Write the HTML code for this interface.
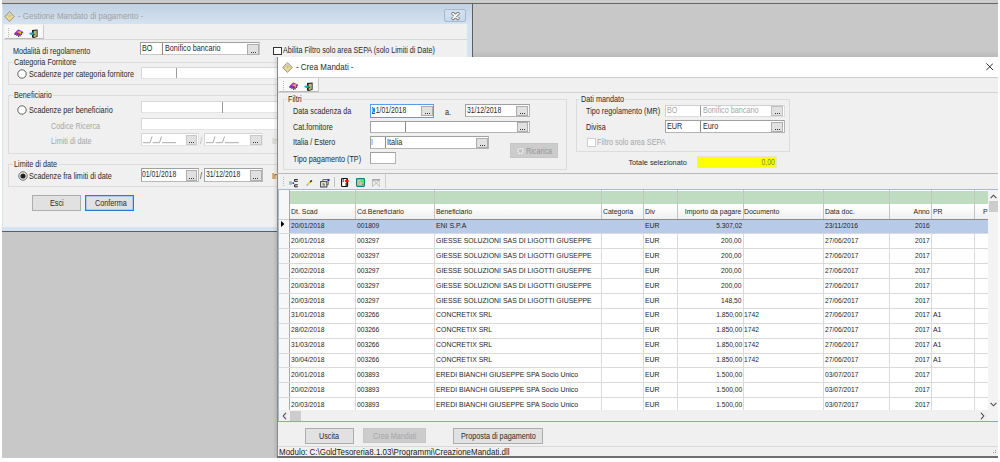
<!DOCTYPE html><html><head><meta charset="utf-8"><style>
*{margin:0;padding:0;box-sizing:border-box}
html,body{width:1000px;height:462px;overflow:hidden;background:#fff}
body{position:relative;font-family:"Liberation Sans",sans-serif;}
div{position:absolute}
.t{font-size:8.6px;line-height:10px;white-space:nowrap;color:#2a2a2a}
.g{font-size:8px;line-height:10px;white-space:nowrap;color:#1e1e1e}
.n{}
.dis{color:#a6a6a6}
</style></head><body><div style="left:2px;top:0px;width:996px;height:3px;background:#cbcbcb"></div>
<div style="left:2px;top:3px;width:996px;height:1px;background:#666"></div>
<div style="left:2px;top:4px;width:996px;height:454px;background:#c8c8c8"></div>
<div style="left:2px;top:4px;width:471px;height:228px;background:#d5e2f1"></div>
<div style="left:472px;top:4px;width:1px;height:228px;background:#5e5e5e"></div>
<div style="left:2px;top:231px;width:471px;height:1px;background:#5e5e5e"></div>
<div style="left:3px;top:4px;width:469px;height:20px;background:linear-gradient(#c1d1e1,#d5e2f0)"></div>
<svg style="position:absolute;left:4px;top:11px" width="11" height="11" viewBox="0 0 11 11"><path d="M5.5 0.5 L10.5 5.5 L5.5 10.5 L0.5 5.5Z" fill="#cfc7a8" stroke="#9a9585" stroke-width="0.8"/><path d="M2.8 5.3 L5.5 8 L8.2 5.3" fill="none" stroke="#f3df7a" stroke-width="1.6"/><path d="M4 4 L5.5 2.5 L7 4" fill="none" stroke="#e6df9a" stroke-width="1"/></svg>
<div class="t" style="left:17.5px;top:11.15px;transform:scaleX(0.905);transform-origin:0 0;font-size:8.8px;color:#a0a0a0;--sx:0.905">- Gestione Mandato di pagamento -</div>
<div style="left:444.3px;top:9.2px;width:22.2px;height:13px;background:linear-gradient(#d4e0ee,#c9d9eb);border:1px solid #a4b8d0;border-radius:2px"></div>
<svg style="position:absolute;left:449.5px;top:10.8px" width="11" height="10" viewBox="0 0 11 10"><path d="M3 2.6 L8 7.4 M8 2.6 L3 7.4" stroke="#6a6a6a" stroke-width="3.4" stroke-linecap="round"/><path d="M3 2.6 L8 7.4 M8 2.6 L3 7.4" stroke="#fafafa" stroke-width="1.9" stroke-linecap="round"/></svg>
<div style="left:3px;top:24px;width:464px;height:202.5px;background:#f0f0f0"></div>
<div style="left:4px;top:38.5px;width:463px;height:1px;background:#d7d7d7"></div>
<div style="left:5px;top:25px;width:39px;height:14px;background:#f8f8f8;border-right:1px solid #cacaca;border-bottom:1px solid #b9b9b9"></div>
<div style="left:8px;top:28px;width:1px;height:1px;background:#b8b8b8"></div>
<div style="left:8px;top:30px;width:1px;height:1px;background:#b8b8b8"></div>
<div style="left:8px;top:32px;width:1px;height:1px;background:#b8b8b8"></div>
<div style="left:8px;top:34px;width:1px;height:1px;background:#b8b8b8"></div>
<div style="left:8px;top:36px;width:1px;height:1px;background:#b8b8b8"></div>
<svg style="position:absolute;left:14px;top:29.3px" width="9.5" height="8.5" viewBox="0 0 9.5 8.5"><path d="M0.6 5.4 L5.4 7.8 L9.2 3.8 L9.2 3.1 L5.3 7 L0.6 4.7Z" fill="#fff"/><path d="M0.6 5.2 L5.4 7.6 L9.2 3.6" fill="none" stroke="#1a1a1a" stroke-width="1.1" stroke-dasharray="1.1 0.9"/><path d="M0.4 4.6 L4.2 0.8 L9 3 L5.2 6.8 Z" fill="#9a1fb5" stroke="#60107a" stroke-width="0.4"/><path d="M2 3.2 L4.3 1.4 L6 2.2 L3.8 4.2Z" fill="#c248dc"/><path d="M4 3.1 L6.6 2.9 L5.5 4.3 M6.6 2.9 L6.2 4.8" stroke="#f5c000" stroke-width="1.1" fill="none"/></svg>
<svg style="position:absolute;left:29.3px;top:28.6px" width="9" height="9" viewBox="0 0 9 9"><path d="M3 1 L8.6 0.4 L8.6 7.8 L4.8 9 L3 8.4 Z" fill="#1c1c1c"/><path d="M4.6 2 L7.8 1.4 L7.8 7.2 L4.6 8.2 Z" fill="#b9b872"/><rect x="5.2" y="5" width="0.9" height="0.9" fill="#222"/><path d="M0 4.6 L1.8 3.4 L4.2 3.6 L4.2 5.8 L1.8 5.9 Z" fill="#18aeb5"/></svg>
<div class="t" style="left:13.2px;top:46.12px;transform:scaleX(0.842);transform-origin:0 0;">Modalità di regolamento</div>
<div style="left:140.2px;top:42.2px;width:119.5px;height:13px;background:#fff;border:1px solid #a0a0a0;border-right-color:#c8c8c8;border-bottom-color:#c8c8c8"></div>
<div style="left:162.2px;top:43px;width:1px;height:11.5px;background:#8a8a8a"></div>
<div class="t" style="left:141.8px;top:43.22px;transform:scaleX(0.842);transform-origin:0 0;">BO</div>
<div class="t" style="left:164.9px;top:43.22px;transform:scaleX(0.842);transform-origin:0 0;">Bonifico bancario</div>
<div style="left:247px;top:44px;width:12px;height:10.5px;background:#e1e1e1;border:1px solid #adadad"></div>
<div style="left:250.5px;top:51.5px;width:5px;height:1px;background:repeating-linear-gradient(90deg,#333 0 1px,transparent 1px 2px)"></div>
<div style="left:273px;top:46.5px;width:9px;height:8.5px;background:#fff;border:1px solid #333"></div>
<div class="t" style="left:283.3px;top:45.42px;transform:scaleX(0.8304976619871097);transform-origin:0 0;">Abilita Filtro solo area SEPA (solo Limiti di Date)</div>
<div style="left:8.2px;top:62.4px;width:459.8px;height:22.800000000000004px;border:1px solid #dcdcdc"></div>
<div style="left:12.5px;top:59px;width:65.38508773125px;height:8px;background:#f0f0f0"></div>
<div class="t" style="left:14px;top:57.42px;transform:scaleX(0.842);transform-origin:0 0;">Categoria Fornitore</div>
<svg style="position:absolute;left:17.4px;top:68.6px" width="10" height="10" viewBox="0 0 10 10"><circle cx="5" cy="5" r="4.2" fill="#fff" stroke="#5a5a5a" stroke-width="0.95"/></svg>
<div class="t" style="left:28.5px;top:69.42px;transform:scaleX(0.842);transform-origin:0 0;">Scadenze per categoria fornitore</div>
<div style="left:140.5px;top:66.5px;width:336px;height:12px;background:#fff;border:1px solid #d6d6d6;border-right-color:#e4e4e4;border-bottom-color:#e4e4e4"></div>
<div style="left:175.8px;top:67.5px;width:1px;height:10px;background:#9a9a9a"></div>
<div style="left:8.2px;top:94.5px;width:459.8px;height:59.19999999999999px;border:1px solid #dcdcdc"></div>
<div style="left:12.5px;top:91.5px;width:40.836288293749995px;height:8px;background:#f0f0f0"></div>
<div class="t" style="left:14px;top:89.92px;transform:scaleX(0.842);transform-origin:0 0;">Beneficiario</div>
<svg style="position:absolute;left:17.4px;top:105.4px" width="10" height="10" viewBox="0 0 10 10"><circle cx="5" cy="5" r="4.2" fill="#fff" stroke="#5a5a5a" stroke-width="0.95"/></svg>
<div class="t" style="left:28.5px;top:105.42px;transform:scaleX(0.842);transform-origin:0 0;">Scadenze per beneficiario</div>
<div class="t dis" style="left:50.7px;top:121.42px;transform:scaleX(0.842);transform-origin:0 0;">Codice Ricerca</div>
<div class="t dis" style="left:50.7px;top:136.12px;transform:scaleX(0.842);transform-origin:0 0;">Limiti di date</div>
<div style="left:140.5px;top:101.3px;width:336px;height:12px;background:#fff;border:1px solid #d6d6d6;border-right-color:#e4e4e4;border-bottom-color:#e4e4e4"></div>
<div style="left:222px;top:102.3px;width:1.2px;height:10.5px;background:#9a9a9a"></div>
<div style="left:140.5px;top:117.5px;width:336px;height:12px;background:#fff;border:1px solid #d6d6d6;border-right-color:#e4e4e4;border-bottom-color:#e4e4e4"></div>
<div style="left:140.5px;top:133.2px;width:58.3px;height:13.2px;background:#fff;border:1px solid #d6d6d6;border-right-color:#e4e4e4;border-bottom-color:#e4e4e4"></div>
<div style="left:185.8px;top:134.8px;width:11.2px;height:10.2px;background:#e1e1e1;border:1px solid #c8c8c8"></div>
<div style="left:188.9px;top:142.0px;width:5px;height:1px;background:repeating-linear-gradient(90deg,#333 0 1px,transparent 1px 2px)"></div>
<div style="left:204.2px;top:133.2px;width:58.8px;height:13.2px;background:#fff;border:1px solid #d6d6d6;border-right-color:#e4e4e4;border-bottom-color:#e4e4e4"></div>
<div style="left:250px;top:134.8px;width:11.5px;height:10.2px;background:#e1e1e1;border:1px solid #c8c8c8"></div>
<div style="left:253.25px;top:142.0px;width:5px;height:1px;background:repeating-linear-gradient(90deg,#333 0 1px,transparent 1px 2px)"></div>
<svg style="position:absolute;left:142.5px;top:136px" width="34" height="7.5" viewBox="0 0 34 7.5"><path d="M0 6.7 H7 L9 0.5 M9.5 6.7 H16.5 L18.5 0.5 M19 6.7 H33" fill="none" stroke="#a0a0a0" stroke-width="0.9"/></svg>
<svg style="position:absolute;left:206.2px;top:136px" width="34" height="7.5" viewBox="0 0 34 7.5"><path d="M0 6.7 H7 L9 0.5 M9.5 6.7 H16.5 L18.5 0.5 M19 6.7 H33" fill="none" stroke="#a0a0a0" stroke-width="0.9"/></svg>
<div class="t" style="left:199.5px;top:136.42px;transform:scaleX(0.842);transform-origin:0 0;color:#b0b0b0">/</div>
<div class="t" style="left:271.5px;top:135.92px;transform:scaleX(0.842);transform-origin:0 0;color:#c0c0c0">In</div>
<div style="left:8.2px;top:164.4px;width:459.8px;height:22.799999999999983px;border:1px solid #dcdcdc"></div>
<div style="left:12.5px;top:160.5px;width:46.0690735875px;height:8px;background:#f0f0f0"></div>
<div class="t" style="left:14px;top:158.92px;transform:scaleX(0.842);transform-origin:0 0;">Limite di date</div>
<svg style="position:absolute;left:17.6px;top:170.7px" width="10" height="10" viewBox="0 0 10 10"><circle cx="5" cy="5" r="4.2" fill="#fff" stroke="#5a5a5a" stroke-width="0.95"/><circle cx="5" cy="5" r="2.6" fill="#1e1e1e"/></svg>
<div class="t" style="left:28.5px;top:170.92px;transform:scaleX(0.842);transform-origin:0 0;">Scadenze fra limiti di date</div>
<div style="left:140.5px;top:168px;width:58.3px;height:14px;background:#fff;border:1px solid #a0a0a0;border-right-color:#b8b8b8;border-bottom-color:#b8b8b8"></div>
<div class="t n" style="left:142.3px;top:168.92px;transform:scaleX(0.795);transform-origin:0 0;">01/01/2018</div>
<div style="left:185.8px;top:169.5px;width:11.2px;height:11px;background:#e1e1e1;border:1px solid #adadad"></div>
<div style="left:188.9px;top:177.5px;width:5px;height:1px;background:repeating-linear-gradient(90deg,#333 0 1px,transparent 1px 2px)"></div>
<div class="t" style="left:200px;top:171.42px;transform:scaleX(0.842);transform-origin:0 0;">/</div>
<div style="left:204.2px;top:168px;width:58.8px;height:14px;background:#fff;border:1px solid #a0a0a0;border-right-color:#b8b8b8;border-bottom-color:#b8b8b8"></div>
<div class="t n" style="left:206.3px;top:168.92px;transform:scaleX(0.795);transform-origin:0 0;">31/12/2018</div>
<div style="left:250px;top:169.5px;width:11.5px;height:11px;background:#e1e1e1;border:1px solid #adadad"></div>
<div style="left:253.25px;top:177.5px;width:5px;height:1px;background:repeating-linear-gradient(90deg,#333 0 1px,transparent 1px 2px)"></div>
<div class="t" style="left:271.5px;top:171.42px;transform:scaleX(0.842);transform-origin:0 0;color:#444">In</div>
<div style="left:32.1px;top:195.1px;width:49px;height:15.5px;background:#e1e1e1;border:1px solid #adadad"></div>
<div class="t" style="left:49.6px;top:198.22px;transform:scaleX(0.842);transform-origin:0 0;">Esci</div>
<div style="left:85.4px;top:195.1px;width:48.5px;height:15.5px;background:#e1e1e1;border:1px solid #2a7ad8;box-shadow:inset 0 0 0 0.5px #7fb0e8"></div>
<div class="t" style="left:94.9px;top:198.22px;transform:scaleX(0.842);transform-origin:0 0;">Conferma</div>
<div style="left:277px;top:56.5px;width:721px;height:400px;background:#f0f0f0"></div>
<div style="left:473px;top:50px;width:525px;height:6.5px;background:linear-gradient(rgba(0,0,0,0),rgba(0,0,0,0.07))"></div>
<div style="left:277px;top:56.5px;width:721px;height:1px;background:#969696"></div>
<div style="left:277px;top:56.5px;width:1px;height:400px;background:#8a8a8a"></div>
<div style="left:278px;top:57.3px;width:720px;height:20px;background:#fff"></div>
<div style="left:278px;top:77px;width:720px;height:1px;background:#cdcdcd"></div>
<svg style="position:absolute;left:282.2px;top:61.5px" width="11" height="11" viewBox="0 0 11 11"><path d="M5.5 0.5 L10.5 5.5 L5.5 10.5 L0.5 5.5Z" fill="#cfc7a8" stroke="#9a9585" stroke-width="0.8"/><path d="M2.8 5.3 L5.5 8 L8.2 5.3" fill="none" stroke="#f3df7a" stroke-width="1.6"/><path d="M4 4 L5.5 2.5 L7 4" fill="none" stroke="#e6df9a" stroke-width="1"/></svg>
<div class="t" style="left:295.8px;top:61.85px;transform:scaleX(0.905);transform-origin:0 0;font-size:8.8px;color:#2a2a2a;--sx:0.905">- Crea Mandati -</div>
<svg style="position:absolute;left:985.5px;top:63.2px" width="7.5" height="7.5" viewBox="0 0 7.5 7.5"><path d="M0.4 0.4 L7.1 7.1 M7.1 0.4 L0.4 7.1" stroke="#1a1a1a" stroke-width="0.9"/></svg>
<div style="left:278px;top:91.8px;width:720px;height:1px;background:#d2d2d2"></div>
<div style="left:279px;top:78px;width:40px;height:14px;background:#f8f8f8;border-right:1px solid #cacaca;border-bottom:1px solid #b9b9b9"></div>
<div style="left:283px;top:81px;width:1px;height:1px;background:#b8b8b8"></div>
<div style="left:283px;top:83px;width:1px;height:1px;background:#b8b8b8"></div>
<div style="left:283px;top:85px;width:1px;height:1px;background:#b8b8b8"></div>
<div style="left:283px;top:87px;width:1px;height:1px;background:#b8b8b8"></div>
<div style="left:283px;top:89px;width:1px;height:1px;background:#b8b8b8"></div>
<svg style="position:absolute;left:288.9px;top:82.4px" width="9.5" height="8.5" viewBox="0 0 9.5 8.5"><path d="M0.6 5.4 L5.4 7.8 L9.2 3.8 L9.2 3.1 L5.3 7 L0.6 4.7Z" fill="#fff"/><path d="M0.6 5.2 L5.4 7.6 L9.2 3.6" fill="none" stroke="#1a1a1a" stroke-width="1.1" stroke-dasharray="1.1 0.9"/><path d="M0.4 4.6 L4.2 0.8 L9 3 L5.2 6.8 Z" fill="#9a1fb5" stroke="#60107a" stroke-width="0.4"/><path d="M2 3.2 L4.3 1.4 L6 2.2 L3.8 4.2Z" fill="#c248dc"/><path d="M4 3.1 L6.6 2.9 L5.5 4.3 M6.6 2.9 L6.2 4.8" stroke="#f5c000" stroke-width="1.1" fill="none"/></svg>
<svg style="position:absolute;left:304.3px;top:81.8px" width="9" height="9" viewBox="0 0 9 9"><path d="M3 1 L8.6 0.4 L8.6 7.8 L4.8 9 L3 8.4 Z" fill="#1c1c1c"/><path d="M4.6 2 L7.8 1.4 L7.8 7.2 L4.6 8.2 Z" fill="#b9b872"/><rect x="5.2" y="5" width="0.9" height="0.9" fill="#222"/><path d="M0 4.6 L1.8 3.4 L4.2 3.6 L4.2 5.8 L1.8 5.9 Z" fill="#18aeb5"/></svg>
<div style="left:283.2px;top:98.8px;width:284.00000000000006px;height:71.2px;border:1px solid #dcdcdc"></div>
<div style="left:286.7px;top:95.2px;width:16.67285646875px;height:8px;background:#f0f0f0"></div>
<div class="t" style="left:288.2px;top:93.62px;transform:scaleX(0.842);transform-origin:0 0;">Filtri</div>
<div class="t" style="left:293px;top:105.92px;transform:scaleX(0.842);transform-origin:0 0;">Data scadenza da</div>
<div class="t" style="left:293px;top:121.62px;transform:scaleX(0.842);transform-origin:0 0;">Cat.fornitore</div>
<div class="t" style="left:293px;top:137.22px;transform:scaleX(0.842);transform-origin:0 0;">Italia / Estero</div>
<div class="t" style="left:293px;top:153.92px;transform:scaleX(0.842);transform-origin:0 0;">Tipo pagamento (TP)</div>
<div style="left:370.1px;top:104.2px;width:64px;height:13.7px;background:#fff;border:1px solid #5b9ce6"></div>
<div style="left:372.3px;top:107.1px;width:3.2px;height:6.6px;background:#0a5fd0"></div>
<div class="t n" style="left:372.3px;top:105.32px;transform:scaleX(0.795);transform-origin:0 0;"><span style='color:#fff'>0</span>1/01/2018</div>
<div style="left:421px;top:106px;width:12px;height:10px;background:#e1e1e1;border:1px solid #adadad"></div>
<div style="left:424.5px;top:113px;width:5px;height:1px;background:repeating-linear-gradient(90deg,#333 0 1px,transparent 1px 2px)"></div>
<div class="t" style="left:444.6px;top:106.92px;transform:scaleX(0.842);transform-origin:0 0;">a.</div>
<div style="left:465.3px;top:104.3px;width:64.4px;height:13.2px;background:#fff;border:1px solid #a0a0a0;border-right-color:#b4b4b4;border-bottom-color:#b4b4b4"></div>
<div class="t n" style="left:467.3px;top:105.32px;transform:scaleX(0.795);transform-origin:0 0;">31/12/2018</div>
<div style="left:516px;top:106px;width:12px;height:10px;background:#e1e1e1;border:1px solid #adadad"></div>
<div style="left:519.5px;top:113px;width:5px;height:1px;background:repeating-linear-gradient(90deg,#333 0 1px,transparent 1px 2px)"></div>
<div style="left:370.1px;top:120.5px;width:159.6px;height:12px;background:#fff;border:1px solid #a0a0a0;border-right-color:#b4b4b4;border-bottom-color:#b4b4b4"></div>
<div style="left:405px;top:121.5px;width:1px;height:10.5px;background:#8c8c8c"></div>
<div style="left:517px;top:122px;width:11px;height:9.5px;background:#e1e1e1;border:1px solid #adadad"></div>
<div style="left:520.0px;top:128.5px;width:5px;height:1px;background:repeating-linear-gradient(90deg,#333 0 1px,transparent 1px 2px)"></div>
<div style="left:370.1px;top:136px;width:119.3px;height:12.6px;background:#fff;border:1px solid #a0a0a0;border-right-color:#b4b4b4;border-bottom-color:#b4b4b4"></div>
<div style="left:384.8px;top:137px;width:1px;height:10.6px;background:#8c8c8c"></div>
<div class="t" style="left:371.3px;top:136.72px;transform:scaleX(0.842);transform-origin:0 0;color:#777">I</div>
<div class="t" style="left:386.8px;top:136.72px;transform:scaleX(0.842);transform-origin:0 0;">Italia</div>
<div style="left:476px;top:137.5px;width:12px;height:10px;background:#e1e1e1;border:1px solid #adadad"></div>
<div style="left:479.5px;top:144.5px;width:5px;height:1px;background:repeating-linear-gradient(90deg,#333 0 1px,transparent 1px 2px)"></div>
<div style="left:370.1px;top:152.1px;width:26.3px;height:12.4px;background:#fff;border:1px solid #a0a0a0;border-right-color:#b4b4b4;border-bottom-color:#b4b4b4"></div>
<div style="left:510px;top:143px;width:48.2px;height:15px;background:#cccccc;border:1px solid #c6c6c6"></div>
<svg style="position:absolute;left:516.5px;top:147px" width="7" height="8" viewBox="0 0 7 8"><circle cx="3.5" cy="4" r="2.7" fill="none" stroke="#f4f4f4" stroke-width="1.3" stroke-dasharray="1.4 0.9"/><circle cx="3.5" cy="4" r="1.3" fill="#bdbdbd"/></svg>
<div class="t" style="left:525.5px;top:146.42px;transform:scaleX(0.842);transform-origin:0 0;color:#949494">Ricarica</div>
<div style="left:575.7px;top:99px;width:214.5999999999999px;height:53.19999999999999px;border:1px solid #dcdcdc"></div>
<div style="left:579.3px;top:95.2px;width:46.0690735875px;height:8px;background:#f0f0f0"></div>
<div class="t" style="left:580.8px;top:93.62px;transform:scaleX(0.842);transform-origin:0 0;">Dati mandato</div>
<div class="t" style="left:585.7px;top:106.22px;transform:scaleX(0.842);transform-origin:0 0;">Tipo regolamento (MR)</div>
<div class="t" style="left:585.7px;top:121.62px;transform:scaleX(0.842);transform-origin:0 0;">Divisa</div>
<div style="left:665.2px;top:104.5px;width:119.5px;height:12px;background:#fff;border:1px solid #cfcfcf;border-right-color:#dcdcdc;border-bottom-color:#dcdcdc"></div>
<div style="left:700.4px;top:105.5px;width:1px;height:10.5px;background:#9a9a9a"></div>
<div class="t dis" style="left:666.5px;top:105.22px;transform:scaleX(0.842);transform-origin:0 0;">BO</div>
<div class="t dis" style="left:702.5px;top:105.22px;transform:scaleX(0.842);transform-origin:0 0;">Bonifico bancario</div>
<div style="left:771px;top:106px;width:12px;height:9.5px;background:#e1e1e1;border:1px solid #c0c0c0"></div>
<div style="left:774.5px;top:112.5px;width:5px;height:1px;background:repeating-linear-gradient(90deg,#333 0 1px,transparent 1px 2px)"></div>
<div style="left:665.2px;top:120.2px;width:119.5px;height:12.5px;background:#fff;border:1px solid #a0a0a0;border-right-color:#b4b4b4;border-bottom-color:#b4b4b4"></div>
<div style="left:700.4px;top:121.2px;width:1px;height:10.5px;background:#8c8c8c"></div>
<div class="t" style="left:666.5px;top:121.02px;transform:scaleX(0.842);transform-origin:0 0;">EUR</div>
<div class="t" style="left:702.5px;top:121.02px;transform:scaleX(0.842);transform-origin:0 0;">Euro</div>
<div style="left:771px;top:122px;width:12px;height:9.5px;background:#e1e1e1;border:1px solid #adadad"></div>
<div style="left:774.5px;top:128.5px;width:5px;height:1px;background:repeating-linear-gradient(90deg,#333 0 1px,transparent 1px 2px)"></div>
<div style="left:587.2px;top:138.2px;width:8.5px;height:8.5px;background:#fff;border:1px solid #cfcfcf"></div>
<div class="t dis" style="left:597px;top:137.12px;transform:scaleX(0.842);transform-origin:0 0;">Filtro solo area SEPA</div>
<div class="t" style="left:628.4px;top:157.87px;font-size:7.3px">Totale selezionato</div>
<div style="left:697.4px;top:155.6px;width:79.2px;height:12.8px;background:#ffff00;border:1px solid #e6e6d0"></div>
<div class="t n" style="right:225.00px;top:156.92px;transform:scaleX(0.795);transform-origin:100% 0;color:#7f7f50">0,00</div>
<div style="left:277px;top:173px;width:721px;height:1px;background:#b9b9b9"></div>
<div style="left:278px;top:174px;width:108px;height:14px;background:#f0f0f0;border-right:1px solid #cfcfcf"></div>
<div style="left:283px;top:177px;width:1px;height:1px;background:#b8b8b8"></div>
<div style="left:283px;top:179px;width:1px;height:1px;background:#b8b8b8"></div>
<div style="left:283px;top:181px;width:1px;height:1px;background:#b8b8b8"></div>
<div style="left:283px;top:183px;width:1px;height:1px;background:#b8b8b8"></div>
<div style="left:283px;top:185px;width:1px;height:1px;background:#b8b8b8"></div>
<div style="left:333.5px;top:176.5px;width:1px;height:10.5px;background:#c0c0c0"></div>
<svg style="position:absolute;left:289px;top:179px" width="9" height="8.5" viewBox="0 0 9 8.5"><rect x="0.3" y="2.6" width="2.6" height="3" fill="#70cccc" stroke="#c0a0a0" stroke-width="0.3"/><circle cx="4.3" cy="4.1" r="0.9" fill="#1818a8"/><path d="M8.8 0.4 H5.6 V2.3 H8.8 M8.8 5.8 H5.6 V7.8 H8.8" stroke="#151515" stroke-width="0.95" fill="none"/></svg>
<svg style="position:absolute;left:306px;top:180px" width="6.5" height="6" viewBox="0 0 6.5 6"><path d="M0.6 5.6 L2.2 4" stroke="#b0b0b0" stroke-width="1.6"/><path d="M2.2 4 L4.4 1.8" stroke="#e8e000" stroke-width="1.8"/><path d="M4.2 2 L5.8 0.5" stroke="#3a1a1a" stroke-width="1.6"/></svg>
<svg style="position:absolute;left:320px;top:179px" width="9.5" height="8.5" viewBox="0 0 9.5 8.5"><path d="M2.8 2.2 V0.6 H8.2 V5.8 H6.8" fill="none" stroke="#606060" stroke-width="1"/><rect x="0.6" y="2.6" width="6.2" height="5.4" fill="none" stroke="#505050" stroke-width="1.1"/><path d="M2.4 5 H5 M3.2 4.2 V7.6 M4.4 5 V7.6" stroke="#707070" stroke-width="0.8"/><rect x="7.6" y="0" width="1.9" height="1.9" fill="#2020b0"/></svg>
<svg style="position:absolute;left:341px;top:178px" width="8.5" height="9" viewBox="0 0 8.5 9"><rect x="0.55" y="0.55" width="6" height="7.9" rx="0.8" fill="#fff" stroke="#111" stroke-width="1.1"/><path d="M2.2 1 V4.2" stroke="#111" stroke-width="0.8"/><path d="M3.4 2.9 L5.6 0.9 L8.2 2.9 L5.6 4.9 Z" fill="#ff0a0a"/><rect x="4.6" y="4.9" width="1.1" height="3.2" fill="#111"/></svg>
<svg style="position:absolute;left:356px;top:178px" width="9" height="9" viewBox="0 0 9 9"><rect x="0.6" y="0.6" width="7.8" height="7.8" rx="0.8" fill="#c8c8c8" stroke="#117a7a" stroke-width="1.2"/><path d="M2.6 7 L4.2 2.2" stroke="#d0c000" stroke-width="0.9"/><path d="M4 3 L6 1 L8.6 3 L6 5 Z" fill="#40f060"/><rect x="5.8" y="5.6" width="1.6" height="1.4" fill="#888"/></svg>
<svg style="position:absolute;left:371.5px;top:179px" width="8.5" height="8" viewBox="0 0 8.5 8"><path d="M0.5 0.8 H8 M0.5 0.5 V7.5 M8 0.5 V7.5 M0.5 0.7 L8 7.6 M8 0.7 L0.5 7.6" stroke="#b4b4b4" stroke-width="0.9" fill="none"/><path d="M0.5 0.8 H8" stroke="#a0a0a0" stroke-width="1.3"/></svg>
<div style="left:278px;top:188.5px;width:720px;height:233px;background:#fff"></div>
<div style="left:278px;top:188.5px;width:720px;height:1px;background:#a7bad0"></div>
<div style="left:278px;top:188.5px;width:1px;height:233px;background:#a7bad0"></div>
<div style="left:279px;top:189.5px;width:709px;height:29.5px;background:linear-gradient(#fff 55%,#efefef)"></div>
<div style="left:289.5px;top:190.7px;width:698.5px;height:13.6px;background:#c0dcc0"></div>
<div style="left:279px;top:189.5px;width:9.5px;height:220.3px;background:#f7f7f7"></div>
<div style="left:288.5px;top:189.5px;width:1px;height:220.3px;background:#a8a8a8"></div>
<div style="left:354.5px;top:189.5px;width:1px;height:29.5px;background:#c4c4c4"></div>
<div style="left:354.5px;top:219px;width:1px;height:190.8px;background:#dadada"></div>
<div style="left:434.4px;top:189.5px;width:1px;height:29.5px;background:#c4c4c4"></div>
<div style="left:434.4px;top:219px;width:1px;height:190.8px;background:#dadada"></div>
<div style="left:600.5px;top:189.5px;width:1px;height:29.5px;background:#c4c4c4"></div>
<div style="left:600.5px;top:219px;width:1px;height:190.8px;background:#dadada"></div>
<div style="left:643px;top:189.5px;width:1px;height:29.5px;background:#c4c4c4"></div>
<div style="left:643px;top:219px;width:1px;height:190.8px;background:#dadada"></div>
<div style="left:676.5px;top:189.5px;width:1px;height:29.5px;background:#c4c4c4"></div>
<div style="left:676.5px;top:219px;width:1px;height:190.8px;background:#dadada"></div>
<div style="left:742.8px;top:189.5px;width:1px;height:29.5px;background:#c4c4c4"></div>
<div style="left:742.8px;top:219px;width:1px;height:190.8px;background:#dadada"></div>
<div style="left:822.7px;top:189.5px;width:1px;height:29.5px;background:#c4c4c4"></div>
<div style="left:822.7px;top:219px;width:1px;height:190.8px;background:#dadada"></div>
<div style="left:889px;top:189.5px;width:1px;height:29.5px;background:#c4c4c4"></div>
<div style="left:889px;top:219px;width:1px;height:190.8px;background:#dadada"></div>
<div style="left:931.4px;top:189.5px;width:1px;height:29.5px;background:#c4c4c4"></div>
<div style="left:931.4px;top:219px;width:1px;height:190.8px;background:#dadada"></div>
<div style="left:973.7px;top:189.5px;width:1px;height:29.5px;background:#c4c4c4"></div>
<div style="left:973.7px;top:219px;width:1px;height:190.8px;background:#dadada"></div>
<div style="left:279px;top:218.6px;width:709px;height:1px;background:#8c8c8c"></div>
<div style="left:279px;top:218.6px;width:9.5px;height:1px;background:#d0d0d0"></div>
<div class="g" style="left:290.7px;top:207.03px;transform:scaleX(0.865);transform-origin:0 0;">Dt. Scad</div>
<div class="g" style="left:356.8px;top:207.03px;transform:scaleX(0.865);transform-origin:0 0;">Cd.Beneficiario</div>
<div class="g" style="left:436.4px;top:207.03px;transform:scaleX(0.865);transform-origin:0 0;">Beneficiario</div>
<div class="g" style="left:602.5px;top:207.03px;transform:scaleX(0.865);transform-origin:0 0;">Categoria</div>
<div class="g" style="left:645.2px;top:207.03px;transform:scaleX(0.865);transform-origin:0 0;">Div</div>
<div class="g" style="right:258.30px;top:207.03px;transform:scaleX(0.865);transform-origin:100% 0;">Importo da pagare</div>
<div class="g" style="left:744.3px;top:207.03px;transform:scaleX(0.865);transform-origin:0 0;">Documento</div>
<div class="g" style="left:824.6px;top:207.03px;transform:scaleX(0.865);transform-origin:0 0;">Data doc.</div>
<div class="g" style="right:70.00px;top:207.03px;transform:scaleX(0.865);transform-origin:100% 0;">Anno</div>
<div class="g" style="left:933px;top:207.03px;transform:scaleX(0.865);transform-origin:0 0;">PR</div>
<div class="g" style="left:983px;top:207.03px;transform:scaleX(0.865);transform-origin:0 0;">P</div>
<div style="left:289.5px;top:219.6px;width:698.5px;height:14px;background:#b7cbe9"></div>
<div style="left:279px;top:233.3px;width:709px;height:1px;background:#dadada"></div>
<div class="g n" style="left:290.7px;top:221.03px;transform:scaleX(0.835);transform-origin:0 0;">20/01/2018</div>
<div class="g n" style="left:356.8px;top:221.03px;transform:scaleX(0.835);transform-origin:0 0;">001809</div>
<div class="g" style="left:436.4px;top:221.03px;transform:scaleX(0.865);transform-origin:0 0;">ENI S.P.A</div>
<div class="g" style="left:645.2px;top:221.03px;transform:scaleX(0.865);transform-origin:0 0;">EUR</div>
<div class="g n" style="left:824.6px;top:221.03px;transform:scaleX(0.835);transform-origin:0 0;">23/11/2016</div>
<div class="g n" style="right:258.30px;top:221.03px;transform:scaleX(0.835);transform-origin:100% 0;">5.307,02</div>
<div class="g n" style="right:70.00px;top:221.03px;transform:scaleX(0.835);transform-origin:100% 0;">2016</div>
<div style="left:279px;top:248.20000000000002px;width:709px;height:1px;background:#dadada"></div>
<div class="g n" style="left:290.7px;top:235.93px;transform:scaleX(0.835);transform-origin:0 0;">20/01/2018</div>
<div class="g n" style="left:356.8px;top:235.93px;transform:scaleX(0.835);transform-origin:0 0;">003297</div>
<div class="g" style="left:436.4px;top:235.93px;transform:scaleX(0.865);transform-origin:0 0;">GIESSE SOLUZIONI SAS DI LIGOTTI GIUSEPPE</div>
<div class="g" style="left:645.2px;top:235.93px;transform:scaleX(0.865);transform-origin:0 0;">EUR</div>
<div class="g n" style="left:824.6px;top:235.93px;transform:scaleX(0.835);transform-origin:0 0;">27/06/2017</div>
<div class="g n" style="right:258.30px;top:235.93px;transform:scaleX(0.835);transform-origin:100% 0;">200,00</div>
<div class="g n" style="right:70.00px;top:235.93px;transform:scaleX(0.835);transform-origin:100% 0;">2017</div>
<div style="left:279px;top:263.09999999999997px;width:709px;height:1px;background:#dadada"></div>
<div class="g n" style="left:290.7px;top:250.83px;transform:scaleX(0.835);transform-origin:0 0;">20/02/2018</div>
<div class="g n" style="left:356.8px;top:250.83px;transform:scaleX(0.835);transform-origin:0 0;">003297</div>
<div class="g" style="left:436.4px;top:250.83px;transform:scaleX(0.865);transform-origin:0 0;">GIESSE SOLUZIONI SAS DI LIGOTTI GIUSEPPE</div>
<div class="g" style="left:645.2px;top:250.83px;transform:scaleX(0.865);transform-origin:0 0;">EUR</div>
<div class="g n" style="left:824.6px;top:250.83px;transform:scaleX(0.835);transform-origin:0 0;">27/06/2017</div>
<div class="g n" style="right:258.30px;top:250.83px;transform:scaleX(0.835);transform-origin:100% 0;">200,00</div>
<div class="g n" style="right:70.00px;top:250.83px;transform:scaleX(0.835);transform-origin:100% 0;">2017</div>
<div style="left:279px;top:277.99999999999994px;width:709px;height:1px;background:#dadada"></div>
<div class="g n" style="left:290.7px;top:265.73px;transform:scaleX(0.835);transform-origin:0 0;">20/02/2018</div>
<div class="g n" style="left:356.8px;top:265.73px;transform:scaleX(0.835);transform-origin:0 0;">003297</div>
<div class="g" style="left:436.4px;top:265.73px;transform:scaleX(0.865);transform-origin:0 0;">GIESSE SOLUZIONI SAS DI LIGOTTI GIUSEPPE</div>
<div class="g" style="left:645.2px;top:265.73px;transform:scaleX(0.865);transform-origin:0 0;">EUR</div>
<div class="g n" style="left:824.6px;top:265.73px;transform:scaleX(0.835);transform-origin:0 0;">27/06/2017</div>
<div class="g n" style="right:258.30px;top:265.73px;transform:scaleX(0.835);transform-origin:100% 0;">200,00</div>
<div class="g n" style="right:70.00px;top:265.73px;transform:scaleX(0.835);transform-origin:100% 0;">2017</div>
<div style="left:279px;top:292.9px;width:709px;height:1px;background:#dadada"></div>
<div class="g n" style="left:290.7px;top:280.63px;transform:scaleX(0.835);transform-origin:0 0;">20/03/2018</div>
<div class="g n" style="left:356.8px;top:280.63px;transform:scaleX(0.835);transform-origin:0 0;">003297</div>
<div class="g" style="left:436.4px;top:280.63px;transform:scaleX(0.865);transform-origin:0 0;">GIESSE SOLUZIONI SAS DI LIGOTTI GIUSEPPE</div>
<div class="g" style="left:645.2px;top:280.63px;transform:scaleX(0.865);transform-origin:0 0;">EUR</div>
<div class="g n" style="left:824.6px;top:280.63px;transform:scaleX(0.835);transform-origin:0 0;">27/06/2017</div>
<div class="g n" style="right:258.30px;top:280.63px;transform:scaleX(0.835);transform-origin:100% 0;">200,00</div>
<div class="g n" style="right:70.00px;top:280.63px;transform:scaleX(0.835);transform-origin:100% 0;">2017</div>
<div style="left:279px;top:307.79999999999995px;width:709px;height:1px;background:#dadada"></div>
<div class="g n" style="left:290.7px;top:295.53px;transform:scaleX(0.835);transform-origin:0 0;">20/03/2018</div>
<div class="g n" style="left:356.8px;top:295.53px;transform:scaleX(0.835);transform-origin:0 0;">003297</div>
<div class="g" style="left:436.4px;top:295.53px;transform:scaleX(0.865);transform-origin:0 0;">GIESSE SOLUZIONI SAS DI LIGOTTI GIUSEPPE</div>
<div class="g" style="left:645.2px;top:295.53px;transform:scaleX(0.865);transform-origin:0 0;">EUR</div>
<div class="g n" style="left:824.6px;top:295.53px;transform:scaleX(0.835);transform-origin:0 0;">27/06/2017</div>
<div class="g n" style="right:258.30px;top:295.53px;transform:scaleX(0.835);transform-origin:100% 0;">148,50</div>
<div class="g n" style="right:70.00px;top:295.53px;transform:scaleX(0.835);transform-origin:100% 0;">2017</div>
<div style="left:279px;top:322.69999999999993px;width:709px;height:1px;background:#dadada"></div>
<div class="g n" style="left:290.7px;top:310.43px;transform:scaleX(0.835);transform-origin:0 0;">31/01/2018</div>
<div class="g n" style="left:356.8px;top:310.43px;transform:scaleX(0.835);transform-origin:0 0;">003266</div>
<div class="g" style="left:436.4px;top:310.43px;transform:scaleX(0.865);transform-origin:0 0;">CONCRETIX SRL</div>
<div class="g" style="left:645.2px;top:310.43px;transform:scaleX(0.865);transform-origin:0 0;">EUR</div>
<div class="g n" style="left:744.3px;top:310.43px;transform:scaleX(0.835);transform-origin:0 0;">1742</div>
<div class="g n" style="left:824.6px;top:310.43px;transform:scaleX(0.835);transform-origin:0 0;">27/06/2017</div>
<div class="g" style="left:933px;top:310.43px;transform:scaleX(0.865);transform-origin:0 0;">A1</div>
<div class="g n" style="right:258.30px;top:310.43px;transform:scaleX(0.835);transform-origin:100% 0;">1.850,00</div>
<div class="g n" style="right:70.00px;top:310.43px;transform:scaleX(0.835);transform-origin:100% 0;">2017</div>
<div style="left:279px;top:337.59999999999997px;width:709px;height:1px;background:#dadada"></div>
<div class="g n" style="left:290.7px;top:325.33px;transform:scaleX(0.835);transform-origin:0 0;">28/02/2018</div>
<div class="g n" style="left:356.8px;top:325.33px;transform:scaleX(0.835);transform-origin:0 0;">003266</div>
<div class="g" style="left:436.4px;top:325.33px;transform:scaleX(0.865);transform-origin:0 0;">CONCRETIX SRL</div>
<div class="g" style="left:645.2px;top:325.33px;transform:scaleX(0.865);transform-origin:0 0;">EUR</div>
<div class="g n" style="left:744.3px;top:325.33px;transform:scaleX(0.835);transform-origin:0 0;">1742</div>
<div class="g n" style="left:824.6px;top:325.33px;transform:scaleX(0.835);transform-origin:0 0;">27/06/2017</div>
<div class="g" style="left:933px;top:325.33px;transform:scaleX(0.865);transform-origin:0 0;">A1</div>
<div class="g n" style="right:258.30px;top:325.33px;transform:scaleX(0.835);transform-origin:100% 0;">1.850,00</div>
<div class="g n" style="right:70.00px;top:325.33px;transform:scaleX(0.835);transform-origin:100% 0;">2017</div>
<div style="left:279px;top:352.49999999999994px;width:709px;height:1px;background:#dadada"></div>
<div class="g n" style="left:290.7px;top:340.23px;transform:scaleX(0.835);transform-origin:0 0;">31/03/2018</div>
<div class="g n" style="left:356.8px;top:340.23px;transform:scaleX(0.835);transform-origin:0 0;">003266</div>
<div class="g" style="left:436.4px;top:340.23px;transform:scaleX(0.865);transform-origin:0 0;">CONCRETIX SRL</div>
<div class="g" style="left:645.2px;top:340.23px;transform:scaleX(0.865);transform-origin:0 0;">EUR</div>
<div class="g n" style="left:744.3px;top:340.23px;transform:scaleX(0.835);transform-origin:0 0;">1742</div>
<div class="g n" style="left:824.6px;top:340.23px;transform:scaleX(0.835);transform-origin:0 0;">27/06/2017</div>
<div class="g" style="left:933px;top:340.23px;transform:scaleX(0.865);transform-origin:0 0;">A1</div>
<div class="g n" style="right:258.30px;top:340.23px;transform:scaleX(0.835);transform-origin:100% 0;">1.850,00</div>
<div class="g n" style="right:70.00px;top:340.23px;transform:scaleX(0.835);transform-origin:100% 0;">2017</div>
<div style="left:279px;top:367.4px;width:709px;height:1px;background:#dadada"></div>
<div class="g n" style="left:290.7px;top:355.13px;transform:scaleX(0.835);transform-origin:0 0;">30/04/2018</div>
<div class="g n" style="left:356.8px;top:355.13px;transform:scaleX(0.835);transform-origin:0 0;">003266</div>
<div class="g" style="left:436.4px;top:355.13px;transform:scaleX(0.865);transform-origin:0 0;">CONCRETIX SRL</div>
<div class="g" style="left:645.2px;top:355.13px;transform:scaleX(0.865);transform-origin:0 0;">EUR</div>
<div class="g n" style="left:744.3px;top:355.13px;transform:scaleX(0.835);transform-origin:0 0;">1742</div>
<div class="g n" style="left:824.6px;top:355.13px;transform:scaleX(0.835);transform-origin:0 0;">27/06/2017</div>
<div class="g" style="left:933px;top:355.13px;transform:scaleX(0.865);transform-origin:0 0;">A1</div>
<div class="g n" style="right:258.30px;top:355.13px;transform:scaleX(0.835);transform-origin:100% 0;">1.850,00</div>
<div class="g n" style="right:70.00px;top:355.13px;transform:scaleX(0.835);transform-origin:100% 0;">2017</div>
<div style="left:279px;top:382.29999999999995px;width:709px;height:1px;background:#dadada"></div>
<div class="g n" style="left:290.7px;top:370.03px;transform:scaleX(0.835);transform-origin:0 0;">20/01/2018</div>
<div class="g n" style="left:356.8px;top:370.03px;transform:scaleX(0.835);transform-origin:0 0;">003893</div>
<div class="g" style="left:436.4px;top:370.03px;transform:scaleX(0.865);transform-origin:0 0;">EREDI BIANCHI GIUSEPPE SPA Socio Unico</div>
<div class="g" style="left:645.2px;top:370.03px;transform:scaleX(0.865);transform-origin:0 0;">EUR</div>
<div class="g n" style="left:824.6px;top:370.03px;transform:scaleX(0.835);transform-origin:0 0;">03/07/2017</div>
<div class="g n" style="right:258.30px;top:370.03px;transform:scaleX(0.835);transform-origin:100% 0;">1.500,00</div>
<div class="g n" style="right:70.00px;top:370.03px;transform:scaleX(0.835);transform-origin:100% 0;">2017</div>
<div style="left:279px;top:397.19999999999993px;width:709px;height:1px;background:#dadada"></div>
<div class="g n" style="left:290.7px;top:384.93px;transform:scaleX(0.835);transform-origin:0 0;">20/02/2018</div>
<div class="g n" style="left:356.8px;top:384.93px;transform:scaleX(0.835);transform-origin:0 0;">003893</div>
<div class="g" style="left:436.4px;top:384.93px;transform:scaleX(0.865);transform-origin:0 0;">EREDI BIANCHI GIUSEPPE SPA Socio Unico</div>
<div class="g" style="left:645.2px;top:384.93px;transform:scaleX(0.865);transform-origin:0 0;">EUR</div>
<div class="g n" style="left:824.6px;top:384.93px;transform:scaleX(0.835);transform-origin:0 0;">03/07/2017</div>
<div class="g n" style="right:258.30px;top:384.93px;transform:scaleX(0.835);transform-origin:100% 0;">1.500,00</div>
<div class="g n" style="right:70.00px;top:384.93px;transform:scaleX(0.835);transform-origin:100% 0;">2017</div>
<div class="g n" style="left:290.7px;top:399.83px;transform:scaleX(0.835);transform-origin:0 0;">20/03/2018</div>
<div class="g n" style="left:356.8px;top:399.83px;transform:scaleX(0.835);transform-origin:0 0;">003893</div>
<div class="g" style="left:436.4px;top:399.83px;transform:scaleX(0.865);transform-origin:0 0;">EREDI BIANCHI GIUSEPPE SPA Socio Unico</div>
<div class="g" style="left:645.2px;top:399.83px;transform:scaleX(0.865);transform-origin:0 0;">EUR</div>
<div class="g n" style="left:824.6px;top:399.83px;transform:scaleX(0.835);transform-origin:0 0;">03/07/2017</div>
<div class="g n" style="right:258.30px;top:399.83px;transform:scaleX(0.835);transform-origin:100% 0;">1.500,00</div>
<div class="g n" style="right:70.00px;top:399.83px;transform:scaleX(0.835);transform-origin:100% 0;">2017</div>
<svg style="position:absolute;left:280.5px;top:220.5px" width="3.5" height="6" viewBox="0 0 3.5 6"><path d="M0 0 L3.5 3 L0 6Z" fill="#000"/></svg>
<div style="left:279px;top:409.8px;width:709px;height:11.5px;background:#f0f0f0"></div>
<svg style="position:absolute;left:281.5px;top:412px" width="5" height="8" viewBox="0 0 5 8"><path d="M4 0.8 L1.2 4 L4 7.2" fill="none" stroke="#4a4a4a" stroke-width="1.1"/></svg>
<div style="left:290px;top:410.5px;width:10.8px;height:10.2px;background:#cdcdcd"></div>
<svg style="position:absolute;left:980px;top:412px" width="5" height="8" viewBox="0 0 5 8"><path d="M1 0.8 L3.8 4 L1 7.2" fill="none" stroke="#4a4a4a" stroke-width="1.1"/></svg>
<div style="left:988px;top:189.5px;width:10px;height:232px;background:#f3f3f3"></div>
<svg style="position:absolute;left:990px;top:193.5px" width="7" height="5" viewBox="0 0 7 5"><path d="M0.6 4.2 L3.5 1.2 L6.4 4.2" fill="none" stroke="#4a4a4a" stroke-width="1.1"/></svg>
<div style="left:989px;top:201.2px;width:8.5px;height:11px;background:#cdcdcd"></div>
<svg style="position:absolute;left:990px;top:402px" width="7" height="5" viewBox="0 0 7 5"><path d="M0.6 0.8 L3.5 3.8 L6.4 0.8" fill="none" stroke="#4a4a4a" stroke-width="1.1"/></svg>
<div style="left:278px;top:421px;width:720px;height:1px;background:#8aa6c4"></div>
<div style="left:304.5px;top:428.2px;width:49.2px;height:15.5px;background:#e1e1e1;border:1px solid #adadad"></div>
<div class="t" style="left:318.8px;top:430.92px;transform:scaleX(0.842);transform-origin:0 0;">Uscita</div>
<div style="left:363px;top:428.2px;width:63px;height:15.2px;background:#cccccc;border:1px solid #c6c6c6"></div>
<div class="t dis" style="left:373px;top:430.92px;transform:scaleX(0.842);transform-origin:0 0;">Crea Mandati</div>
<div style="left:453.4px;top:428.2px;width:89.5px;height:15.5px;background:#e1e1e1;border:1px solid #adadad"></div>
<div class="t" style="left:461px;top:430.92px;transform:scaleX(0.842);transform-origin:0 0;">Proposta di pagamento</div>
<div style="left:278px;top:446px;width:720px;height:1px;background:#d9d9d9"></div>
<div class="t" style="left:278.7px;top:446.95px;transform:scaleX(0.905);transform-origin:0 0;font-size:8.8px;color:#202020;--sx:0.905">Modulo: C:\GoldTesoreria8.1.03\Programmi\CreazioneMandati.dll</div>
<div style="left:277px;top:455.7px;width:721px;height:2px;background:#6e6e6e"></div>
<div style="left:273px;top:57px;width:4px;height:400px;background:linear-gradient(90deg,rgba(0,0,0,0),rgba(0,0,0,0.10))"></div>
<div style="left:993px;top:452px;width:1px;height:1px;background:#999"></div>
<div style="left:995px;top:450px;width:1px;height:1px;background:#999"></div>
<div style="left:995px;top:452px;width:1px;height:1px;background:#999"></div></body></html>
